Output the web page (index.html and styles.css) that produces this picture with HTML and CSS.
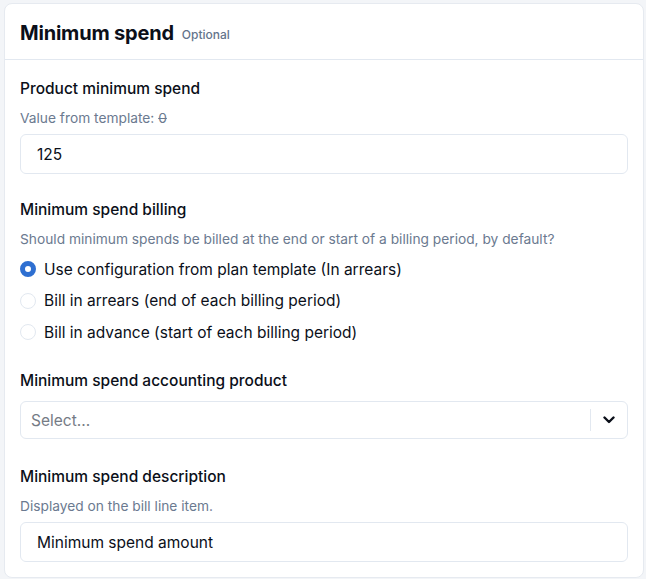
FILE: index.html
```html
<!DOCTYPE html>
<html lang="en">
<head>
<meta charset="utf-8">
<title>Minimum spend</title>
<link rel="stylesheet" href="styles.css">
</head>
<body>
<section class="card">
  <header class="card-header">
    <h2 class="title">Minimum spend</h2>
    <span class="optional">Optional</span>
  </header>
  <div class="card-body">
    <div class="field">
      <label class="label">Product minimum spend</label>
      <p class="hint">Value from template: <s>0</s></p>
      <div class="input">125</div>
    </div>

    <div class="field field-radios">
      <label class="label">Minimum spend billing</label>
      <p class="hint">Should minimum spends be billed at the end or start of a billing period, by default?</p>
      <div class="radios">
        <div class="radio-row"><span class="radio checked"></span><span>Use configuration from plan template (In arrears)</span></div>
        <div class="radio-row"><span class="radio"></span><span>Bill in arrears (end of each billing period)</span></div>
        <div class="radio-row"><span class="radio"></span><span>Bill in advance (start of each billing period)</span></div>
      </div>
    </div>

    <div class="field field-select">
      <label class="label label-select">Minimum spend accounting product</label>
      <div class="select">
        <span class="placeholder">Select...</span>
        <span class="sep"></span>
        <span class="chevron">
          <svg width="12" height="8" viewBox="0 0 12 8"><path d="M1.5 1.5 L6 6 L10.5 1.5" fill="none" stroke="#0b0f19" stroke-width="2.4" stroke-linecap="round" stroke-linejoin="round"/></svg>
        </span>
      </div>
    </div>

    <div class="field">
      <label class="label">Minimum spend description</label>
      <p class="hint">Displayed on the bill line item.</p>
      <div class="input">Minimum spend amount</div>
    </div>
  </div>
</section>
</body>
</html>
```

FILE: styles.css
```css
* { box-sizing: border-box; }
html, body { margin: 0; padding: 0; }
body {
  background: #f3f5f8;
  font-family: Inter, "Noto Sans", sans-serif;
  color: #0b0f19;
  padding: 3px 2px 0 4px;
}
.card {
  background: #fff;
  border: 1px solid #e6eaf0;
  border-radius: 8px;
  overflow: hidden;
}
.card-header {
  height: 56px;
  padding: 0 15px;
  display: flex;
  align-items: center;
  gap: 8px;
  border-bottom: 1px solid #e2e8f0;
}
.title {
  margin: 2px 0 0;
  font-size: 20px;
  font-weight: 700;
  letter-spacing: -0.2px;
}
.optional {
  font-size: 12px;
  font-weight: 500;
  color: #64748b;
  margin-top: 6px;
}
.card-body {
  padding: 17px 15px 15px;
  display: flex;
  flex-direction: column;
  gap: 24px;
}
.field { display: flex; flex-direction: column; }
.field-radios { margin-bottom: 1px; }
.field-select { margin-bottom: 2px; }
.label {
  font-size: 15.5px;
  line-height: 24px;
  font-weight: 500;
  color: #0b0f19;
}
.label-select { margin-bottom: 8px; }
.hint {
  margin: 7px 0 6px;
  font-size: 13.75px;
  line-height: 20px;
  color: #6b7a90;
}
.hint s { text-decoration-thickness: 1px; }
.input {
  height: 40px;
  border: 1px solid #e2e8f0;
  border-radius: 6px;
  padding: 0 16px;
  display: flex;
  align-items: center;
  font-size: 15.5px;
  color: #0b0f19;
}
.radios {
  display: flex;
  flex-direction: column;
  gap: 7.5px;
  margin-top: 2px;
}
.radio-row {
  display: flex;
  align-items: center;
  gap: 8px;
  height: 24px;
  font-size: 15.5px;
}
.radio {
  width: 16px;
  height: 16px;
  border-radius: 50%;
  border: 1.5px solid #e2e8f0;
  background: #fff;
  flex: none;
}
.radio.checked {
  border: 5px solid #2e6fd1;
  background: #fff;
}
.select {
  height: 38px;
  border: 1px solid #e2e8f0;
  border-radius: 6px;
  display: flex;
  align-items: center;
  padding-left: 10px;
}
.placeholder {
  flex: 1;
  font-size: 15.5px;
  color: #757b85;
}
.sep {
  width: 1px;
  height: 22px;
  background: #e2e8f0;
}
.chevron {
  width: 36px;
  display: flex;
  justify-content: center;
  align-items: center;
}
.chevron svg { display: block; }
```
